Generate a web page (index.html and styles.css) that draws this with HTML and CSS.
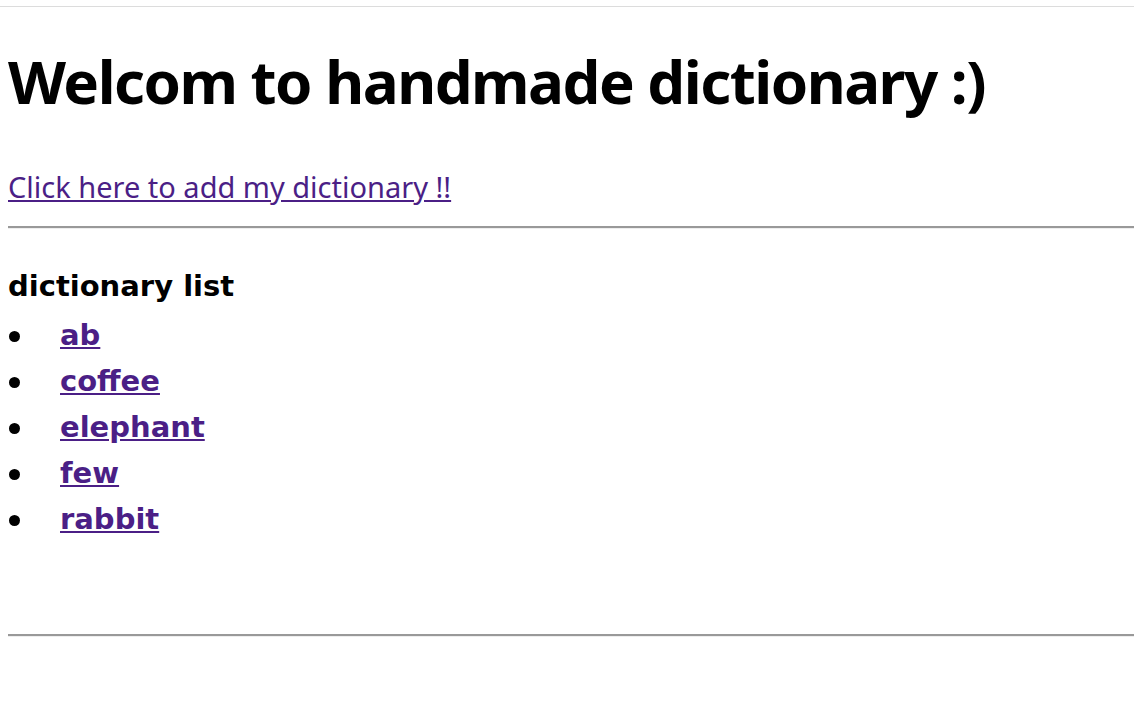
FILE: index.html
```html
<!DOCTYPE html>
<html>
<head>
<meta charset="utf-8">
<link rel="stylesheet" href="styles.css">
</head>
<body>
<div class="topline"></div>
<main class="page">
  <h1 class="title">Welcom to handmade dictionary :)</h1>
  <p class="add"><a href="#">Click here to add my dictionary !!</a></p>
  <hr class="rule">
  <h3 class="list-title">dictionary list</h3>
  <ul class="words">
    <li><a href="#">ab</a></li>
    <li><a href="#">coffee</a></li>
    <li><a href="#">elephant</a></li>
    <li><a href="#">few</a></li>
    <li><a href="#">rabbit</a></li>
  </ul>
  <hr class="rule rule-bottom">
</main>
</body>
</html>
```

FILE: styles.css
```css
html, body {
  margin: 0;
  padding: 0;
  background: #fff;
}
body {
  font-family: "Noto Sans", "Noto Sans CJK KR", sans-serif;
  color: #000;
  padding-top: 6px;
}
.topline {
  height: 1px;
  background: #dcdcdc;
}
.page {
  padding-left: 8px;
}
a {
  color: #4b1f86;
}
.title {
  margin: 37px 0 0;
  font-size: 60px;
  line-height: 74px;
  font-weight: 700;
  letter-spacing: -1.5px;
}
.add {
  margin: 51px 0 0;
  font-size: 29px;
  line-height: 36px;
}
.rule {
  margin: 21px 0 0;
  height: 0;
  border: 0;
  border-top: 2px solid #999;
  border-bottom: 1px solid #eee;
}
.list-title {
  margin: 41px 0 0;
  font-family: "DejaVu Sans", "Noto Sans", sans-serif;
  font-size: 29px;
  line-height: 32px;
  font-weight: 700;
}
.words {
  list-style: none;
  margin: 10px 0 0;
  padding: 0;
}
.words li {
  display: flex;
  align-items: center;
  font-family: "DejaVu Sans", "Noto Sans", sans-serif;
  font-size: 29px;
  line-height: 46px;
  font-weight: 700;
}
.words li::before {
  content: "";
  width: 11px;
  height: 11px;
  border-radius: 50%;
  background: #000;
  margin: 2px 40px 0 1px;
}
.rule-bottom {
  margin-top: 92px;
}
```
